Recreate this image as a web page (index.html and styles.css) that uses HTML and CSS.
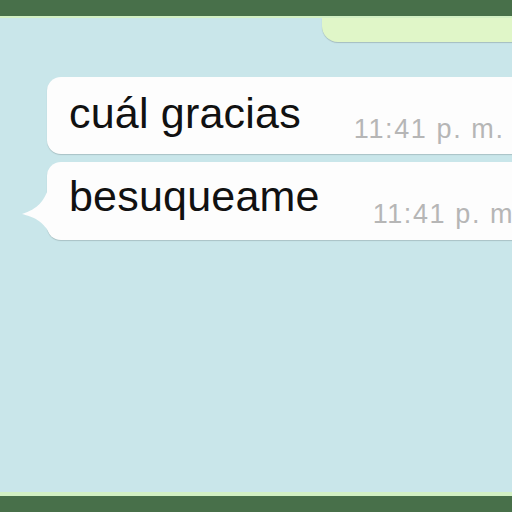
FILE: index.html
```html
<!DOCTYPE html>
<html>
<head>
<meta charset="utf-8">
<link rel="stylesheet" href="styles.css">
</head>
<body>
<div class="screen">
  <div class="topbar"></div>
  <main class="chat">
    <div class="out-bubble"></div>
    <div class="in-bubble first">
      <span class="msg">cuál gracias</span>
      <span class="time">11:41 p. m.</span>
    </div>
    <div class="in-bubble second">
      <svg class="tail" width="40" height="50" viewBox="0 0 40 50"><path d="M30 0 C25 14 19 22 3 27 C14 30 24 33 33 50 L40 50 L40 0 Z" fill="#fdfdfd"/></svg>
      <span class="msg">besuqueame</span>
      <span class="time">11:41 p. m.</span>
    </div>
  </main>
  <div class="bottombar"></div>
</div>
</body>
</html>
```

FILE: styles.css
```css
html, body {
  margin: 0;
  padding: 0;
  overflow: hidden;
}
.screen {
  width: 512px;
  height: 512px;
  display: flex;
  flex-direction: column;
  background: #c9e6ea;
  font-family: "Liberation Sans", Arial, sans-serif;
  overflow: hidden;
}
.topbar {
  height: 16px;
  flex: none;
  background: #48704a;
  border-bottom: 2px solid #d2f0c4;
}
.chat {
  flex: 1;
  display: flex;
  flex-direction: column;
}
.out-bubble {
  margin-left: 322px;
  width: 220px;
  height: 24px;
  background: #e0f6c8;
  border-bottom-left-radius: 16px;
  box-shadow: 0 1px 1px rgba(0, 0, 0, 0.18);
}
.in-bubble {
  position: relative;
  margin-left: 47px;
  width: 520px;
  height: 77px;
  box-sizing: border-box;
  padding: 11px 0 0 22px;
  display: flex;
  align-items: flex-start;
  gap: 53px;
  background: #fdfdfd;
  border-radius: 14px;
  box-shadow: 0 1px 1px rgba(0, 0, 0, 0.16);
}
.in-bubble.first {
  margin-top: 35px;
}
.in-bubble.second {
  margin-top: 8px;
  height: 78px;
  padding-top: 9px;
}
.msg {
  font-size: 43px;
  line-height: 50px;
  letter-spacing: 0.2px;
  color: #111;
  white-space: nowrap;
}
.time {
  margin-top: 26px;
  font-size: 27px;
  line-height: 30px;
  letter-spacing: 1.6px;
  color: #b6b6b6;
  white-space: nowrap;
}
.second .time {
  margin-top: 28px;
}
.tail {
  position: absolute;
  left: -28px;
  top: 25px;
}
.bottombar {
  height: 16px;
  flex: none;
  background: #48704a;
  border-top: 4px solid #d2f0c4;
}
```
